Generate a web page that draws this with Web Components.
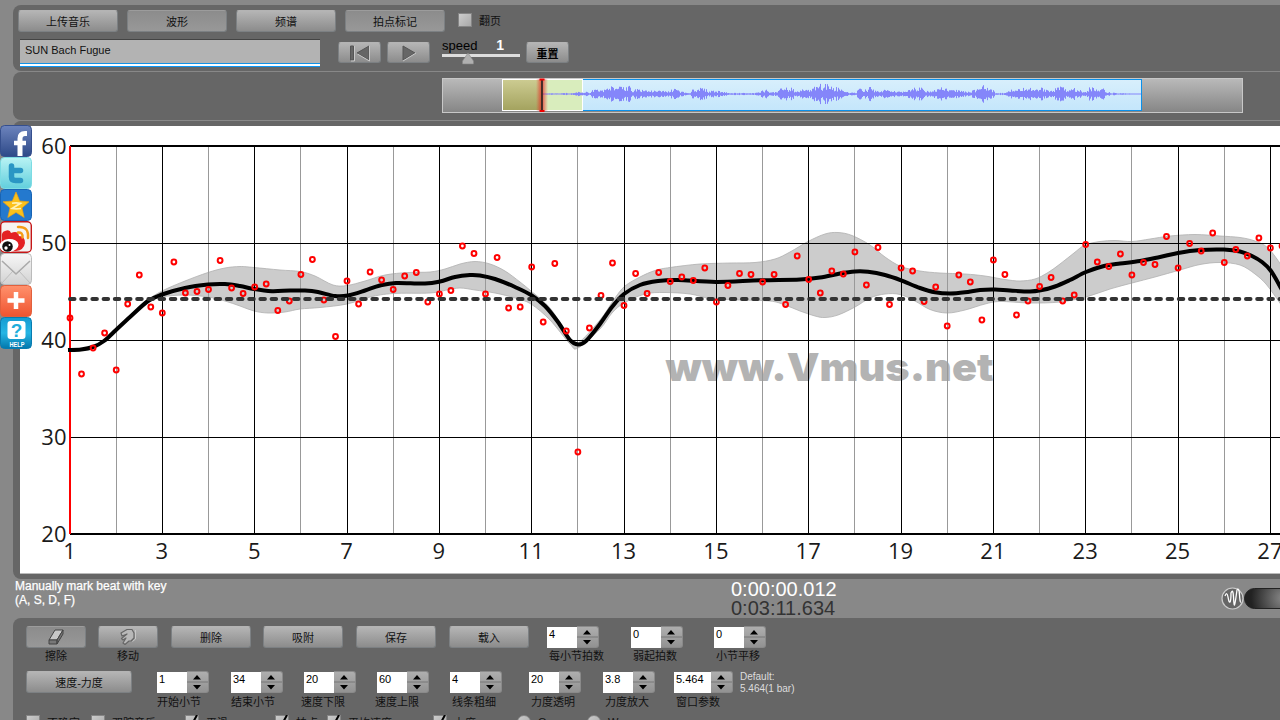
<!DOCTYPE html>
<html lang="zh-CN">
<head>
<meta charset="utf-8">
<title>Vmus.net</title>
<style>
    body {
        margin: 0;
        width: 1280px;
        height: 720px;
        overflow: hidden;
        background: #888;
        font-family: "Liberation Sans", "Noto Sans CJK SC", sans-serif;
        font-size: 11px;
        color: #111;
    }
</style>
</head>
<body>
<vm-app></vm-app>
<script>
class VmPanel extends HTMLElement {
    constructor() {
        super();
        this.attachShadow({ mode: "open" });
        this.shadowRoot.innerHTML = `
        <style>
          :host {
            display: block;
            box-sizing: border-box;
            margin-left: 13px;
            background: #666;
            border-radius: 8px 0 0 8px;
          }
        </style>
        <slot></slot>`;
    }
}

class VmButton extends HTMLElement {
    constructor() {
        super();
        this.attachShadow({ mode: "open" });
        this.shadowRoot.innerHTML = `
        <style>
          :host { display: block; height: 22px; }
          button {
            display: flex;
            align-items: center;
            justify-content: center;
            width: 100%;
            height: 100%;
            padding: 0;
            border: 1px solid #7c8083;
            border-top-color: #b4b4b4;
            border-radius: 3px;
            background: linear-gradient(#b5b5b5, #8c8c8c);
            font: inherit;
            color: inherit;
            box-sizing: border-box;
          }
          :host([active]) button {
            background: linear-gradient(#8c8c8c, #989898);
            border-top-color: #9c9c9c;
          }
          :host([bold]) button { font-weight: 700; color: #000; }
        </style>
        <button><slot></slot></button>`;
    }
}

class VmCheck extends HTMLElement {
    constructor() {
        super();
        this.attachShadow({ mode: "open" });
        const mark = this.hasAttribute("checked")
            ? `<svg width="14" height="14" viewBox="0 0 14 14"><path d="M3 7l3 4 6-11" fill="none" stroke="#000" stroke-width="2"/></svg>`
            : "";
        this.shadowRoot.innerHTML = `
        <style>
          :host { display: flex; align-items: center; gap: 7px; height: 16px; white-space: nowrap; }
          .box {
            width: 14px;
            height: 14px;
            box-sizing: border-box;
            flex: none;
            border: 1px solid #858585;
            background: linear-gradient(135deg, #ccc, #a8a8a8);
          }
          :host([radio]) .box { border-radius: 50%; }
          svg { display: block; margin: -1px; }
        </style>
        <span class="box">${mark}</span><slot></slot>`;
    }
}

class VmStepper extends HTMLElement {
    constructor() {
        super();
        this.attachShadow({ mode: "open" });
        this.shadowRoot.innerHTML = `
        <style>
          :host { display: block; white-space: nowrap; }
          .field { display: flex; height: 22px; }
          .value {
            width: var(--field-width, 30px);
            height: 21px;
            margin-top: 1px;
            padding: 0 0 0 2px;
            box-sizing: border-box;
            background: #fff;
            font: 11px/14px "Liberation Sans", sans-serif;
            color: #000;
          }
          .arrows {
            width: 22px;
            box-sizing: border-box;
            border: 1px solid #8a8a8a;
            border-left: 0;
            border-radius: 0 3px 3px 0;
            background: linear-gradient(#aeaeae, #929292);
          }
          svg { display: block; }
          .label { line-height: 16px; margin: var(--label-top, 1px) 0 0 var(--label-shift, 0px); }
        </style>
        <div class="field">
          <div class="value">${this.getAttribute("value")}</div>
          <div class="arrows">
            <svg width="21" height="20" viewBox="0 0 21 20">
              <path d="M0 10h21" stroke="#777"/>
              <path d="M6 7.500l4-4.500 4 4.500zM6 13l4 4.500 4-4.500z" fill="#000"/>
            </svg>
          </div>
        </div>
        <div class="label"><slot></slot></div>`;
    }
}

class VmSpeed extends HTMLElement {
    constructor() {
        super();
        this.attachShadow({ mode: "open" });
        this.shadowRoot.innerHTML = `
        <style>
          :host { display: block; width: 78px; height: 28px; font-size: 13px; line-height: 15px; color: #000; }
          .caption { display: flex; justify-content: space-between; padding-right: 16px; }
          b { color: #fff; font-size: 14px; }
          svg { display: block; margin-top: -1px; }
        </style>
        <div class="caption"><span>speed</span><b>1</b></div>
        <svg width="78" height="13" viewBox="0 0 78 13">
          <path d="M0 3.500h78" stroke="#ddd" stroke-width="3"/>
          <path d="M26 1l5.500 8v3h-11V9z" fill="#b0b0b0" stroke="#858585" stroke-width=".6"/>
        </svg>`;
    }
}

class VmWave extends HTMLElement {
    constructor() {
        super();
        this.attachShadow({ mode: "open" });
        this.shadowRoot.innerHTML = `
        <style>
          :host { display: block; width: 801px; height: 35px; }
          svg { display: block; overflow: visible; }
        </style>
        <svg width="801" height="35" viewBox="442 78 801 35">
          <defs>
            <linearGradient id="grey" x2="0" y2="1"><stop stop-color="#bababa"/><stop offset="1" stop-color="#858585"/></linearGradient>
            <linearGradient id="sky" x2="0" y2="1"><stop stop-color="#d8effc"/><stop offset="1" stop-color="#c4e6fb"/></linearGradient>
            <linearGradient id="sand" x2="0" y2="1"><stop stop-color="#cccb91"/><stop offset="1" stop-color="#a4a35f"/></linearGradient>
            <linearGradient id="glow"><stop stop-color="#e22" stop-opacity="0"/><stop offset=".5" stop-color="#e11" stop-opacity=".7"/><stop offset="1" stop-color="#e22" stop-opacity="0"/></linearGradient>
          </defs>
          <rect x="442.500" y="78.500" width="800" height="34" fill="url(#grey)" stroke="#c8c8c8"/>
          <rect x="542" y="79.500" width="599.500" height="31" fill="url(#sky)" stroke="#0b90ea"/>
          <rect x="502.500" y="79.500" width="80" height="31" fill="#d9edbd" stroke="#fff"/>
          <rect x="503" y="80" width="39" height="30" fill="url(#sand)"/>
          <path d="${this.wavePath()}" stroke="#8486fa" fill="none"/>
          <rect x="536" y="79" width="12" height="32" fill="url(#glow)"/>
          <path d="M542 79v33" stroke="#222" stroke-width="1.600"/>
          <path d="M539.500 79.500h5M539.500 111h5" stroke="#e00" stroke-width="2"/>
        </svg>`;
    }

    // Interpolates the loudness envelope and draws one vertical bar per pixel.
    wavePath() {
        const env = [543, .6, 560, .7, 567, 1, 572, .7, 576, 2, 582, 2, 590, 2, 592, 4, 600, 4, 605, 5, 611, 7, 626, 6, 629, 8,
            632, 5, 645, 4, 652, 3, 667, 3, 675, 5, 683, 2, 690, 1, 692, 5, 704, 6, 708, 3, 720, 3, 728, 1, 755, 1, 765, 4,
            774, 2, 780, 5, 790, 6, 798, 2, 804, 5, 812, 6, 820, 9, 828, 9, 838, 6, 845, 2, 856, 1, 859, 8, 863, 3, 871, 7,
            875, 3, 885, 4, 900, 2, 907, 3, 918, 7, 927, 3, 935, 4, 942, 6, 953, 4, 965, 3, 970, 2, 974, 5, 979, 4, 983, 8,
            987, 6, 992, 5, 995, 1, 1005, 1, 1012, 5, 1035, 6, 1045, 6, 1050, 3, 1060, 7, 1068, 4, 1075, 6, 1085, 2,
            1090, 7, 1098, 5, 1103, 5, 1107, 2, 1118, .7, 1141, .5];
        let d = "";
        for (let x = 543, k = 0; x < 1141; x++) {
            while (x > env[k + 2]) k += 2;
            const t = (x - env[k]) / (env[k + 2] - env[k]);
            const amp = env[k + 1] + (env[k + 3] - env[k + 1]) * t;
            const noise = Math.abs(Math.sin(x * 12.9898) * 43758.5453 % 1);
            const h = Math.max(.5, amp * (.35 + noise * .8));
            d += `M${x + .5} ${(94 - h).toFixed(1)}v${(h * 2).toFixed(1)}`;
        }
        return d;
    }
}

class VmChart extends HTMLElement {
    constructor() {
        super();
        this.attachShadow({ mode: "open" });
        this.shadowRoot.innerHTML = `
        <style>
          :host { display: block; height: 447px; background: #fff; overflow: hidden; border-bottom: 1px solid #bbb; }
          svg { display: block; }
          text { font-family: "Open Sans", "Noto Sans", sans-serif; font-size: 22px; fill: #1a1a1a; }
          .mark { font-family: Inter, "Liberation Sans", sans-serif; font-weight: 900; font-size: 39px; fill: #b3b3b3; }
        </style>
        <svg width="1260" height="447" viewBox="20 126 1260 447">${this.draw()}</svg>`;
    }

    // Catmull-Rom spline through a flat list of x, y pairs.
    spline(flat, start = "M") {
        const p = [];
        for (let i = 0; i < flat.length; i += 2) p.push([flat[i], flat[i + 1]]);
        let d = `${start}${p[0]}`;
        for (let i = 0; i < p.length - 1; i++) {
            const a = p[i - 1] || p[i], b = p[i], c = p[i + 1], e = p[i + 2] || c;
            d += `C${[b[0] + (c[0] - a[0]) / 6, b[1] + (c[1] - a[1]) / 6,
                c[0] - (e[0] - b[0]) / 6, c[1] - (e[1] - b[1]) / 6, c[0], c[1]].map(n => n.toFixed(1))}`;
        }
        return d;
    }

    draw() {
        const bar = 46.17;
        const dots = [318, 374, 348, 333, 370, 304, 275, 307, 313, 262, 293, 291.5, 289.5, 260.5, 288, 293.5, 287, 284,
            310.5, 301, 274.5, 259.5, 300, 336.5, 281, 304, 272, 280, 289.5, 276, 272.5, 302, 294, 290.5, 246, 253.5, 294,
            257.5, 308, 307, 267, 322, 263.5, 331, 452, 328, 295.5, 263, 305.5, 273.5, 293.5, 272.5, 281.5, 277, 280.5,
            268, 302, 285.5, 273.5, 274.5, 282, 274.5, 304.5, 256, 279.5, 293, 271, 274, 252, 285, 247.5, 304.5, 268, 271,
            301.5, 287, 326, 275, 282, 320, 260, 274.5, 315, 301, 286.5, 277.5, 301, 295, 244.5, 262, 266.5, 254, 275,
            262.5, 264.5, 236.5, 268, 243.5, 251, 233, 262.5, 249.5, 256, 238, 248, 246];
        const mean = [68, 350, 81, 349.5, 93, 347, 104, 341, 116, 330, 130, 317, 148, 301, 162, 294.5, 185, 288, 208, 284.5,
            225, 284, 240, 286, 254, 289, 272, 291.2, 290, 290.5, 305, 290.5, 318, 292, 335, 296, 348, 295.5, 365, 290.500,
            380, 285.5, 396, 283, 425, 283.5, 440, 281.5, 455, 277, 470, 275, 480, 275.5, 495, 279, 515, 287, 531, 295,
            545, 306, 558, 322, 570, 340, 578, 344.5, 586, 341, 600, 324, 612, 307, 624, 294, 640, 285, 658, 281, 678, 280,
            716, 282, 760, 280.3, 800, 279.5, 820, 277.5, 840, 273.500, 855, 271.5, 868, 271.8, 885, 275, 901, 280.3,
            920, 288, 935, 292.3, 950, 293.5, 965, 292.3, 980, 290, 995, 289.5, 1010, 290.5, 1030, 291.5, 1042, 290,
            1055, 286.5, 1070, 280, 1086, 272, 1104, 266, 1120, 263.5, 1140, 261, 1160, 257, 1178, 253, 1200, 250, 1224, 249.5,
            1240, 251.5, 1252, 256, 1262, 262, 1271, 271, 1282, 290];
        const upper = [130, 315, 148, 300, 162, 291, 185, 281, 208, 272.5, 225, 268, 240, 266.5, 254, 267.5, 280, 270, 300, 271.5,
            315, 276, 333, 285, 347, 285.5, 365, 281, 385, 275, 408, 272.500, 430, 272, 445, 269, 460, 264, 475, 261.5,
            490, 264, 505, 271, 520, 282, 531, 291, 550, 308, 570, 338, 578, 343, 600, 320, 615, 298, 625, 286, 640, 277,
            655, 270.5, 670, 267.5, 700, 264, 730, 263, 755, 262.5, 775, 259, 790, 252, 808, 241.5, 825, 234, 838, 232.5,
            852, 235.500, 870, 245, 885, 257, 901, 266.5, 920, 271, 940, 273, 965, 274, 985, 276, 1005, 279.5, 1020, 281,
            1035, 279, 1048, 272.5, 1060, 264, 1074, 253, 1085, 245, 1100, 241.5, 1115, 240.5, 1132, 241.5, 1150, 239,
            1170, 236, 1195, 234.5, 1220, 236, 1240, 237.500, 1255, 241, 1268, 248, 1282, 266];
        const lower = [1282, 306, 1275, 296, 1266, 284, 1255, 274, 1240, 265, 1220, 262.5, 1200, 264.500, 1180, 270, 1155, 277,
            1132, 283, 1110, 289, 1086, 297, 1060, 302, 1030, 303, 1000, 301.5, 985, 304, 965, 310, 947, 313, 930, 309.5,
            915, 301, 900, 294.5, 885, 294, 870, 298, 855, 307, 838, 315, 825, 317.5, 815, 316, 800, 311, 785, 305, 770, 301,
            740, 300, 710, 298.5, 690, 294, 665, 292.5, 645, 294, 624, 303, 612, 313, 600, 329, 578, 348, 570, 344, 550, 320,
            531, 304, 515, 298, 495, 293, 475, 290, 460, 288, 447, 290, 430, 293, 393, 293.5, 370, 297, 347, 304, 320, 307.5,
            300, 309, 285, 312, 268, 313, 254, 311, 240, 306, 225, 301, 208, 297, 185, 295, 162, 297, 148, 303, 130, 318];

        let out = `<text class="mark" x="665.500" y="381" textLength="328" lengthAdjust="spacingAndGlyphs">www.Vmus.net</text>`;
        out += `<path d="${this.spline(upper)}${this.spline(lower, "L")}Z" fill="#ccc" stroke="#b0b0b0" stroke-width=".8"/>`;
        for (let i = 1; i <= 26; i++) {
            const x = Math.floor(70 + i * bar) + .5;
            out += `<path d="M${x} 146V534" stroke="${i % 2 ? "#999" : "#000"}"/>`;
        }
        for (let v = 60, y = 146; v >= 20; v -= 10, y += 97) {
            const edge = v === 60 || v === 20;
            out += `<path d="M70 ${edge ? y : y + .5}H1280" stroke="#000" stroke-width="${edge ? 2 : 1}"/>`;
            out += `<text x="66.500" y="${y + 8}" text-anchor="end">${v}</text>`;
        }
        for (let n = 1; n <= 27; n += 2) {
            out += `<text x="${(69.500 + (n - 1) * bar).toFixed(1)}" y="559" text-anchor="middle">${n}</text>`;
        }
        out += `<path d="M70 146V534" stroke="#f00" stroke-width="2"/>`;
        out += `<path d="${this.spline(mean)}" fill="none" stroke="#000" stroke-width="4"/>`;
        dots.forEach((y, i) => {
            out += `<circle cx="${(70 + i * bar / 4).toFixed(1)}" cy="${y}" r="2.400" fill="none" stroke="#f00" stroke-width="2"/>`;
        });
        out += `<path d="M70 299H1280" stroke="#333" stroke-width="4" stroke-linecap="round" stroke-dasharray="4.500 6.700"/>`;
        return out;
    }
}

class VmShare extends HTMLElement {
    constructor() {
        super();
        this.attachShadow({ mode: "open" });
        this.shadowRoot.innerHTML = `
        <style>
          :host { display: flex; flex-direction: column; width: 32px; }
          svg { display: block; border-radius: 4px; }
          text { font-family: "Liberation Sans", sans-serif; font-weight: 700; }
        </style>
        <svg width="32" height="32" viewBox="0 0 32 32">
          <defs><linearGradient id="fb" x2="0" y2="1"><stop stop-color="#6d84bd"/><stop offset="1" stop-color="#2d4988"/></linearGradient></defs>
          <rect x=".5" y=".5" width="31" height="31" rx="4" fill="url(#fb)" stroke="#354f8d"/>
          <path d="M20 31V13.500q0-5 5-5h2" fill="none" stroke="#fff" stroke-width="5"/>
          <path d="M14 18h12" stroke="#fff" stroke-width="4.500"/>
        </svg>
        <svg width="32" height="32" viewBox="0 0 32 32">
          <defs><linearGradient id="tw" x2="0" y2="1"><stop stop-color="#b9f3f4"/><stop offset="1" stop-color="#62cfdd"/></linearGradient></defs>
          <rect x=".5" y=".5" width="31" height="31" rx="4" fill="url(#tw)" stroke="#7cdce3"/>
          <path d="M11.500 9v11q0 3.500 4 3.500h5M12 13.500h8.500" fill="none" stroke="#2a96c4" stroke-width="5.500" stroke-linecap="round" stroke-linejoin="round"/>
        </svg>
        <svg width="32" height="32" viewBox="0 0 32 32">
          <rect x=".5" y=".5" width="31" height="31" rx="4" fill="#2479ce" stroke="#1763b4"/>
          <path d="M16 3l3.700 9 9.300.8-7 6.100 2.200 9.600L16 23.400 7.800 28.500 10 18.900 3 12.800l9.300-.8z" fill="#fbc11c" stroke="#e9a017" stroke-width=".7"/>
          <path d="M12 14.300q4-1 8.500 0l-8.500 5.200q4 .8 9 0" fill="none" stroke="#fff3b8" stroke-width="1.700"/>
        </svg>
        <svg width="32" height="32" viewBox="0 0 32 32">
          <rect x=".7" y=".7" width="30.600" height="30.600" rx="4" fill="#f5f3f2" stroke="#c51718" stroke-width="1.400"/>
          <path d="M2 17Q1 11 5 10q5-2 6 2 7-3 8 3 6 0 6 7-1 7-9 8H4Q1 27 2 17z" fill="#e42124"/>
          <ellipse cx="9" cy="24.500" rx="9.500" ry="6.500" fill="#fff" transform="rotate(-6 9 24.500)"/>
          <circle cx="7.500" cy="25.500" r="5.300" fill="#111"/><circle cx="6" cy="27" r="1.700" fill="#fff"/><circle cx="9.500" cy="24" r="1" fill="#fff"/>
          <path d="M18 6q11-1 10 11M18 11.500q5-.5 4.500 5" fill="none" stroke="#f49c17" stroke-width="2.500" stroke-linecap="round"/>
        </svg>
        <svg width="32" height="32" viewBox="0 0 32 32">
          <defs><linearGradient id="ml" x2="0" y2="1"><stop stop-color="#f7f7f7"/><stop offset="1" stop-color="#d2d2d2"/></linearGradient></defs>
          <rect x=".5" y=".5" width="31" height="31" rx="4" fill="url(#ml)" stroke="#bbb"/>
          <path d="M2 30L13 18M30 30L19 18" stroke="#bdbdbd" fill="none"/>
          <path d="M2 8l14 13L30 8" stroke="#aaa" stroke-width="1.600" fill="none"/>
        </svg>
        <svg width="32" height="32" viewBox="0 0 32 32">
          <defs><linearGradient id="pl" x2="0" y2="1"><stop stop-color="#ff916c"/><stop offset="1" stop-color="#ef5430"/></linearGradient></defs>
          <rect x=".5" y=".5" width="31" height="31" rx="4" fill="url(#pl)" stroke="#e1603d"/>
          <path d="M16 7v17M7.500 15.500h17" stroke="#fff" stroke-width="4.500"/>
        </svg>
        <svg width="32" height="32" viewBox="0 0 32 32">
          <defs><linearGradient id="hp" x2="0" y2="1"><stop stop-color="#159bd1"/><stop offset=".5" stop-color="#25b5e4"/><stop offset="1" stop-color="#0277ac"/></linearGradient></defs>
          <rect x=".5" y=".5" width="31" height="31" rx="4" fill="url(#hp)" stroke="#087cb0"/>
          <rect x="7.500" y="4" width="18" height="18" rx="3" fill="#fff"/>
          <text x="16.500" y="20" font-size="19" text-anchor="middle" fill="#1eaedb">?</text>
          <text x="17" y="29.500" font-size="6.500" text-anchor="middle" textLength="15" lengthAdjust="spacingAndGlyphs" fill="#fff">HELP</text>
        </svg>`;
    }
}

class VmApp extends HTMLElement {
    constructor() {
        super();
        this.attachShadow({ mode: "open" });
        this.shadowRoot.innerHTML = `
        <style>
          :host { display: block; position: relative; width: 1280px; height: 720px; overflow: hidden; padding-top: 5px; box-sizing: border-box; }
          .row { display: flex; }
          .top { height: 66px; padding: 5px 0 0 5px; }
          .tabs { gap: 9px; height: 29px; }
          .tabs vm-button { width: 100px; }
          .tabs vm-check { margin: 2px 0 0 4px; }
          .title {
            width: 300px;
            height: 28px;
            box-sizing: border-box;
            margin: 0 18px 0 2px;
            padding: 1px 5px;
            border-top: 1px solid #444;
            border-bottom: 1px solid #0d96f5;
            box-shadow: inset 0 -2px #fff, inset 0 -3px #1493e6;
            background: #b3b3b3;
            color: #111;
            line-height: 18px;
          }
          .small { width: 43px; margin: 3px 6px 0 0; }
          .tabs + .row .small { height: 21px; }
          vm-speed { margin: -1px 6px 0 6px; }
          .wave { height: 48px; margin-top: 1px; padding: 6px 0 0 429px; }
          .view { height: 458px; margin-top: 2px; padding: 4px 0 0 7px; margin-top: 1px; border-top: 1px solid #666; }
          .status { height: 39px; padding-left: 15px; justify-content: space-between; align-items: flex-start; color: #fff; }
          .hint { width: 716px; font-size: 12px; line-height: 14px; -webkit-text-stroke: .25px #fff; }
          .clock { font-size: 20px; line-height: 19px; width: 490px; padding-top: 1px; }
          .clock div + div { color: #333; }
          .knob { width: 59px; padding-top: 7px; }
          svg { display: block; }
          .tools { height: 110px; padding: 8px 0 0 13px; border-radius: 8px 0 0 0; }
          .first, .second { display: grid; align-items: start; height: 45px; }
          .first { grid-template-columns: 72px 73px 92px 93px 93px 98px 84px 83px 60px; --label-top: 0px; }
          .second { grid-template-columns: 131px 74px 73px 73px 73px 79px 74px 71px 66px 90px; }
          .first vm-button { width: 80px; }
          .tool { width: 60px; text-align: center; line-height: 16px; }
          .first .tool vm-button { width: 60px; }
          .first vm-stepper { --label-shift: 2px; }
          .wide { width: 106px; }
          .wider { --field-width: 37px; }
          .note { font-size: 10px; line-height: 12px; color: #ddd; }
          .third { display: grid; grid-template-columns: 65px 94px 90px 52px 106px 84px 70px 60px; margin-top: -2px; }
          vm-share { position: absolute; left: 0; top: 125px; }
        </style>
        <vm-panel class="top">
          <div class="row tabs">
            <vm-button>上传音乐</vm-button>
            <vm-button active>波形</vm-button>
            <vm-button>频谱</vm-button>
            <vm-button active>拍点标记</vm-button>
            <vm-check>翻页</vm-check>
          </div>
          <div class="row">
            <div class="title">SUN Bach Fugue</div>
            <vm-button class="small">
              <svg width="24" height="18" viewBox="0 0 24 18"><path d="M2.500 2h3v14h-3zM21 2v14L9 9z" fill="#666" stroke="#555"/><path d="M6.500 2v15H3M21.500 2v15l-12-7" fill="none" stroke="#c8c8c8"/></svg>
            </vm-button>
            <vm-button class="small">
              <svg width="20" height="18" viewBox="0 0 20 18"><path d="M4 2v14l12-7z" fill="#666" stroke="#555"/><path d="M4 17l13-8" stroke="#c8c8c8"/></svg>
            </vm-button>
            <vm-speed></vm-speed>
            <vm-button class="small" bold>重置</vm-button>
          </div>
        </vm-panel>
        <vm-panel class="wave"><vm-wave></vm-wave></vm-panel>
        <vm-panel class="view"><vm-chart></vm-chart></vm-panel>
        <div class="row status">
          <div class="hint">Manually mark beat with key<br>(A, S, D, F)</div>
          <div class="clock"><div>0:00:00.012</div><div>0:03:11.634</div></div>
          <div class="knob">
            <svg width="59" height="24" viewBox="0 0 59 24">
              <defs><radialGradient id="lamp" gradientUnits="userSpaceOnUse" cx="62" cy="12" r="32"><stop stop-color="#888"/><stop offset="1" stop-color="#222"/></radialGradient></defs>
              <circle cx="11.500" cy="12.500" r="10.500" fill="#666" stroke="#ccc" stroke-width="1.200"/>
              <path d="M4 10q2-5 3 1t2 5 1-9q2-5 2.500 4t1 8 1.500-8 1-7q2-3 2.500 5t1.500 7" fill="none" stroke="#fff" stroke-width="1.300"/>
              <rect x="23.500" y="2.500" width="70" height="20" rx="10" fill="url(#lamp)" stroke="#222"/>
            </svg>
          </div>
        </div>
        <vm-panel class="tools">
          <div class="first">
            <div class="tool"><vm-button active>
              <svg width="18" height="16" viewBox="0 0 18 16"><path d="M8 1h8l-6 10H2z" fill="#c8c8c8" stroke="#444"/><path d="M2 11h8v4H2zM10 11l6-10v4l-6 10z" fill="#777" stroke="#444"/></svg>
            </vm-button>擦除</div>
            <div class="tool"><vm-button>
              <svg width="20" height="18" viewBox="0 0 20 18"><path d="M3 5l6-3.500h5L16 5v5l-3 3h-2l-4 3.500-2-1.500 3-5-3 2-1.500-1.500L9 6 4 8z" fill="#b8b8b8" stroke="#666" stroke-width="1.200" stroke-linejoin="round"/><path d="M17.500 2v9l-3 2.500" fill="none" stroke="#c8c8c8"/></svg>
            </vm-button>移动</div>
            <vm-button>删除</vm-button>
            <vm-button>吸附</vm-button>
            <vm-button>保存</vm-button>
            <vm-button>载入</vm-button>
            <vm-stepper value="4">每小节拍数</vm-stepper>
            <vm-stepper value="0">弱起拍数</vm-stepper>
            <vm-stepper value="0">小节平移</vm-stepper>
          </div>
          <div class="second">
            <vm-button class="wide">速度-力度</vm-button>
            <vm-stepper value="1">开始小节</vm-stepper>
            <vm-stepper value="34">结束小节</vm-stepper>
            <vm-stepper value="20" style="--label-shift: -3px">速度下限</vm-stepper>
            <vm-stepper value="60" style="--label-shift: -2px">速度上限</vm-stepper>
            <vm-stepper value="4" style="--label-shift: 2px">线条粗细</vm-stepper>
            <vm-stepper value="20" style="--label-shift: 2px">力度透明</vm-stepper>
            <vm-stepper value="3.8" style="--label-shift: 2px">力度放大</vm-stepper>
            <vm-stepper value="5.464" class="wider" style="--label-shift: 2px">窗口参数</vm-stepper>
            <div class="note">Default:<br>5.464(1 bar)</div>
          </div>
          <div class="third">
            <vm-check>不确定</vm-check>
            <vm-check>双踪音乐</vm-check>
            <vm-check checked>平滑</vm-check>
            <vm-check checked>拍点</vm-check>
            <vm-check checked>平均速度</vm-check>
            <vm-check checked>力度</vm-check>
            <vm-check radio>Q</vm-check>
            <vm-check radio>W</vm-check>
          </div>
        </vm-panel>
        <vm-share></vm-share>`;
    }
}

customElements.define("vm-panel", VmPanel);
customElements.define("vm-button", VmButton);
customElements.define("vm-check", VmCheck);
customElements.define("vm-stepper", VmStepper);
customElements.define("vm-speed", VmSpeed);
customElements.define("vm-wave", VmWave);
customElements.define("vm-chart", VmChart);
customElements.define("vm-share", VmShare);
customElements.define("vm-app", VmApp);
</script>
</body>
</html>
